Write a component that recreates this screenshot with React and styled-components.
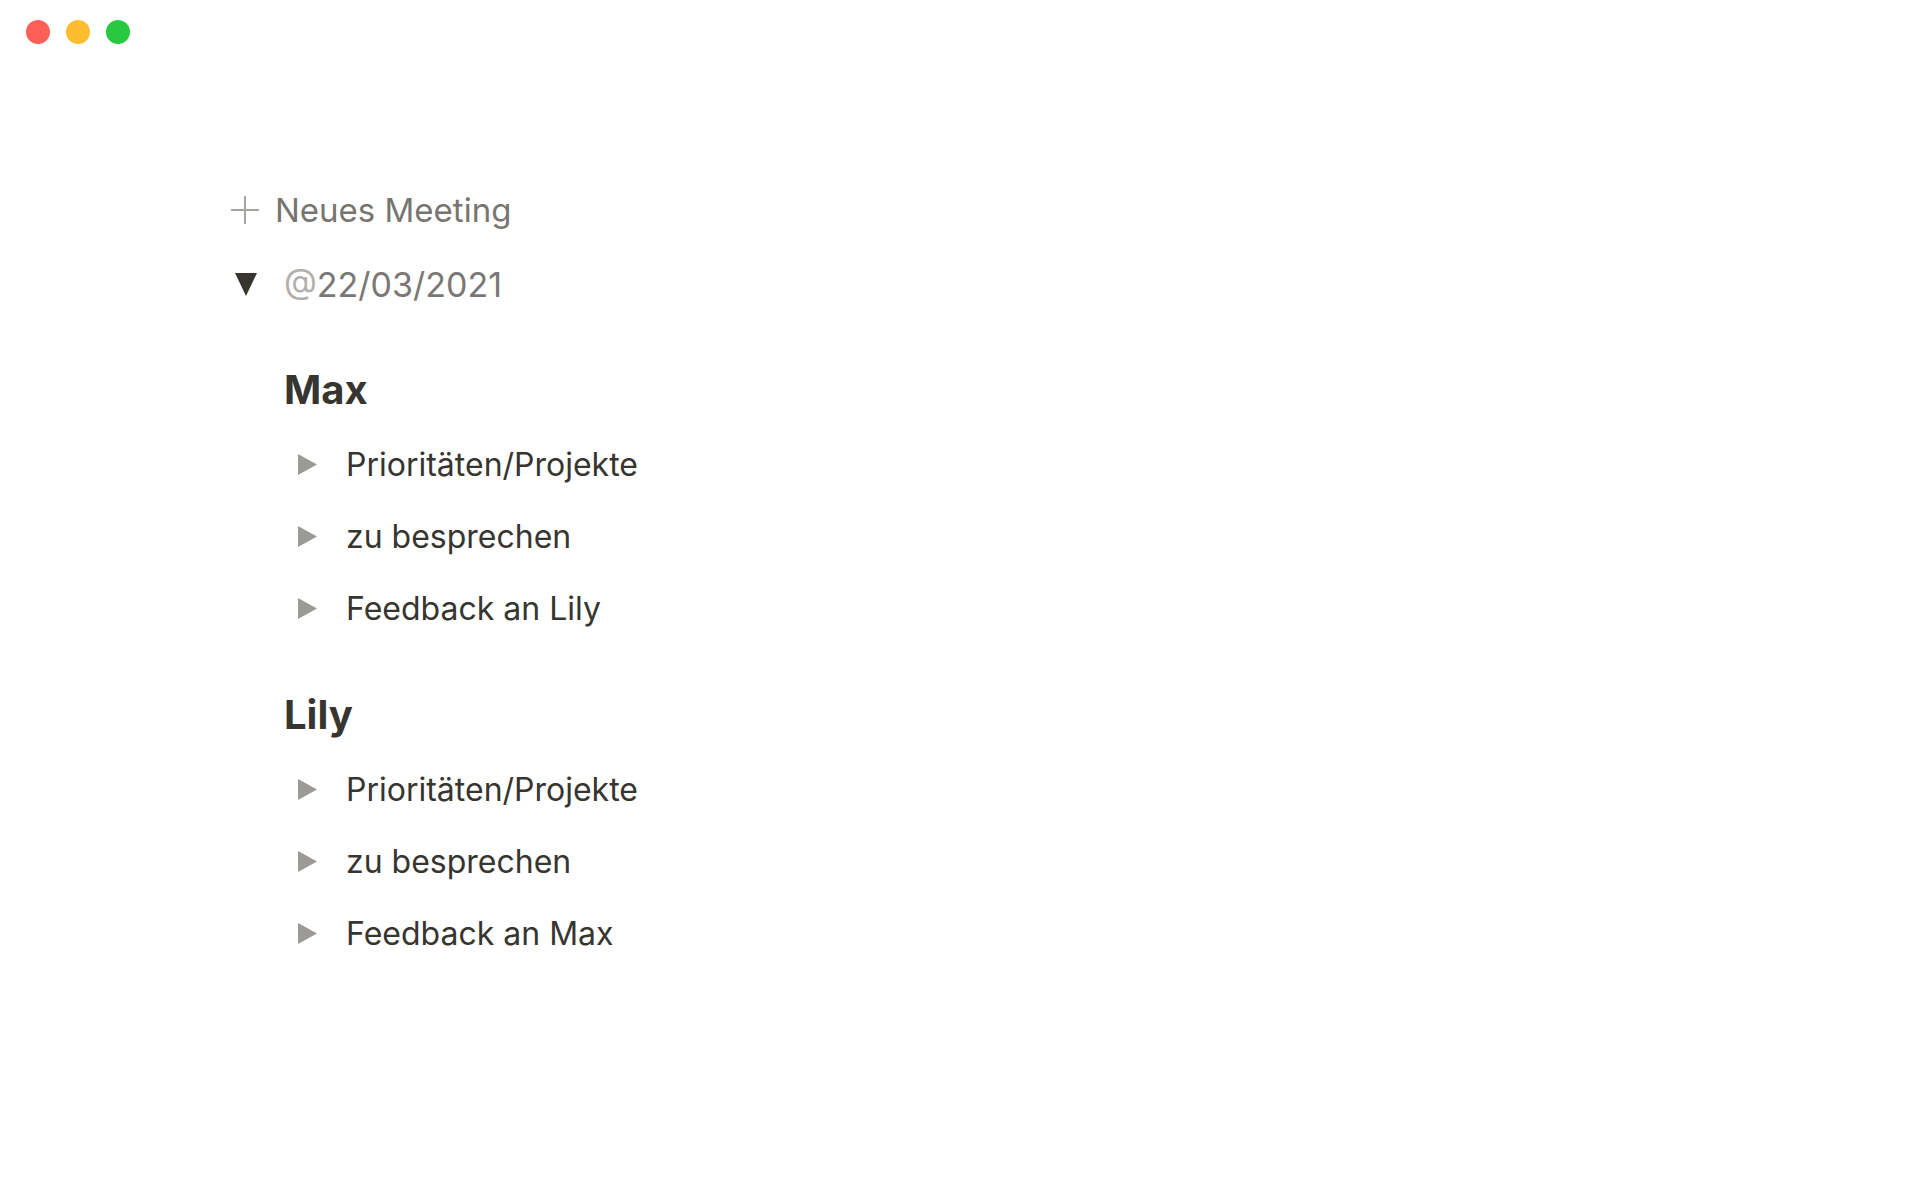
import React from "react";
import styled, { createGlobalStyle } from "styled-components";

const GlobalStyle = createGlobalStyle`
  html, body {
    margin: 0;
    padding: 0;
    background: #ffffff;
  }
  body {
    font-family: Inter, "Noto Sans", "Liberation Sans", sans-serif;
    color: #37352f;
    -webkit-font-smoothing: antialiased;
  }
`;

const people = [
  { name: "Max", other: "Lily" },
  { name: "Lily", other: "Max" },
];

function Caret({ open, color }) {
  if (open) {
    return (
      <CaretBox $w={24} $h={26}>
        <svg width="22" height="23" viewBox="0 0 22 23">
          <polygon points="0,0 22,0 11,23" fill={color} />
        </svg>
      </CaretBox>
    );
  }
  return (
    <CaretBox $w={20} $h={22}>
      <svg width="19" height="21" viewBox="0 0 19 21">
        <polygon points="0,0 19,10.5 0,21" fill={color} />
      </svg>
    </CaretBox>
  );
}

function App() {
  return (
    <>
      <GlobalStyle />
      <Window>
        <TitleBar>
          <Light $color="#ff5f57" />
          <Light $color="#febc2e" />
          <Light $color="#28c840" />
        </TitleBar>

        <Page>
          <NewRow>
            <svg width="28" height="28" viewBox="0 0 28 28">
              <path d="M14 0v28M0 14h28" stroke="#a5a4a0" strokeWidth="2" />
            </svg>
            <NewLabel>Neues Meeting</NewLabel>
          </NewRow>

          <ToggleRow>
            <Caret open color="#37352f" />
            <DateMention>
              <At>@</At>22/03/2021
            </DateMention>
          </ToggleRow>

          <ToggleBody>
            {people.map((p) => (
              <Section key={p.name}>
                <Heading>{p.name}</Heading>
                <ItemRow>
                  <Caret color="#9b9a97" />
                  <ItemText>Prioritäten/Projekte</ItemText>
                </ItemRow>
                <ItemRow>
                  <Caret color="#9b9a97" />
                  <ItemText>zu besprechen</ItemText>
                </ItemRow>
                <ItemRow>
                  <Caret color="#9b9a97" />
                  <ItemText>Feedback an {p.other}</ItemText>
                </ItemRow>
              </Section>
            ))}
          </ToggleBody>
        </Page>
      </Window>
    </>
  );
}

export default App;

const Window = styled.div`
  width: 1920px;
  height: 1200px;
  background: #ffffff;
  overflow: hidden;
`;

const TitleBar = styled.div`
  display: flex;
  gap: 16px;
  padding: 20px 0 0 26px;
`;

const Light = styled.span`
  width: 24px;
  height: 24px;
  border-radius: 50%;
  background: ${(p) => p.$color};
`;

const Page = styled.div`
  display: flex;
  flex-direction: column;
  padding: 144px 0 0 231px;
`;

const NewRow = styled.div`
  display: flex;
  align-items: center;
  gap: 16px;
  height: 44px;
`;

const NewLabel = styled.span`
  font-size: 33px;
  color: #77756f;
`;

const ToggleRow = styled.div`
  display: flex;
  align-items: center;
  gap: 26px;
  height: 44px;
  margin-top: 30px;
  padding-left: 3px;
`;

const CaretBox = styled.span`
  display: flex;
  align-items: center;
  justify-content: center;
  width: ${(p) => p.$w}px;
  height: ${(p) => p.$h}px;
  flex-shrink: 0;
`;

const DateMention = styled.span`
  font-size: 34px;
  color: #7a7874;
`;

const At = styled.span`
  color: #b1b0ad;
`;

const ToggleBody = styled.div`
  display: flex;
  flex-direction: column;
  gap: 46px;
  padding: 59px 0 0 53px;
`;

const Section = styled.div`
  display: flex;
  flex-direction: column;
`;

const Heading = styled.h3`
  margin: 0 0 13px;
  font-size: 40px;
  font-weight: 700;
  line-height: 50px;
  color: #37352f;
`;

const ItemRow = styled.div`
  display: flex;
  align-items: center;
  gap: 29px;
  height: 72px;
  padding-left: 13px;
`;

const ItemText = styled.span`
  font-size: 32px;
  color: #37352f;
`;
